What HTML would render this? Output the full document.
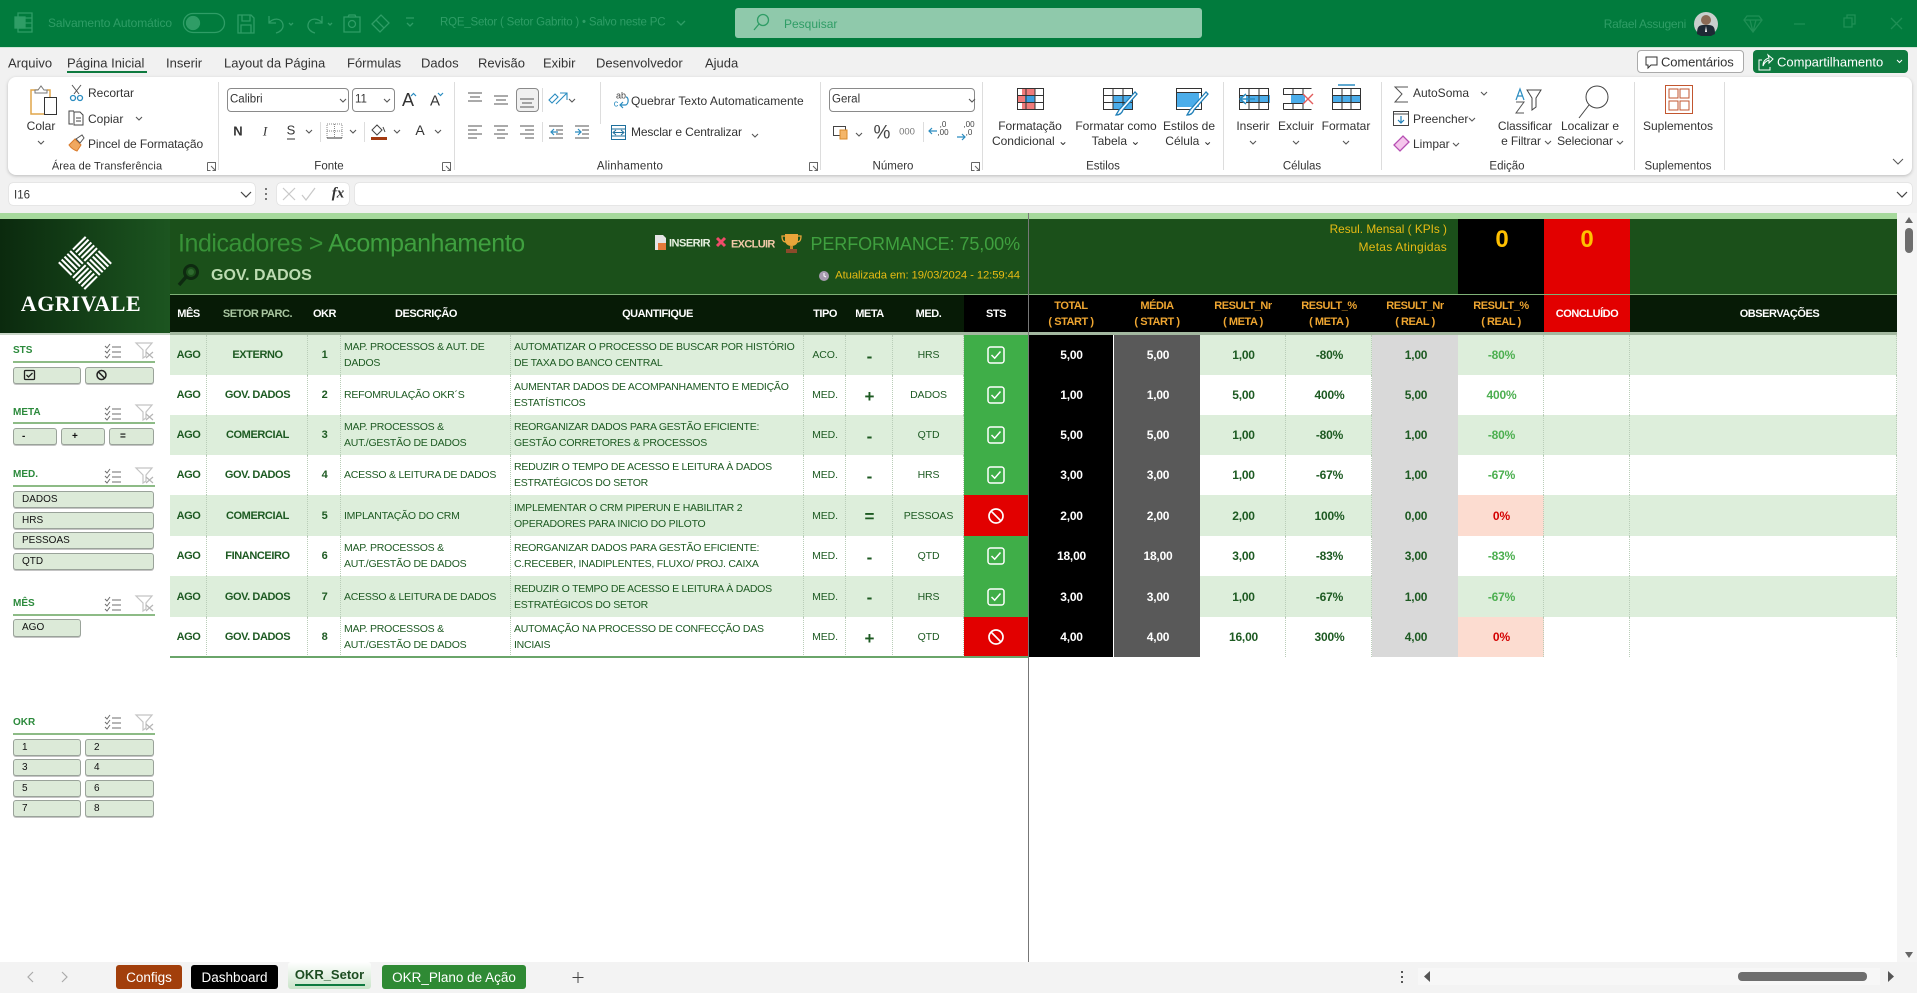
<!DOCTYPE html>
<html lang="pt-BR"><head><meta charset="utf-8"><title>RQE_Setor</title>
<style>
html,body{margin:0;padding:0;width:1917px;height:993px;overflow:hidden;background:#f1f1f1;font-family:"Liberation Sans",sans-serif;color:#333}
.b{position:absolute}
.t,.c,.r{position:absolute;white-space:nowrap;font-size:12px;line-height:1}
.t{transform:translateY(-50%)}
.c{transform:translate(-50%,-50%);text-align:center}
.r{transform:translateY(-50%);text-align:right}
.d{color:#2f9d66}
table{position:absolute;left:170px;top:294px;border-collapse:separate;border-spacing:0;table-layout:fixed;width:1727px}
td,th{padding:0;text-align:center;vertical-align:middle;overflow:hidden;white-space:nowrap}
thead th{background:#071b06;color:#fff;font-size:11px;line-height:15.500px;letter-spacing:-.45px;border-top:1px solid #7fb177;border-bottom:3px solid #a3b8a0;box-sizing:border-box;height:41px;padding-top:2px}
thead th.k{background:#000;color:#efa631}
thead th.s{background:#000}
thead th.v{background:#e20000;color:#fff}
thead th.o{padding-left:32px}
tbody td{font-size:11px;font-weight:bold;color:#1d5a22;letter-spacing:-.4px;border-right:1px dotted #b9cdb8;padding-left:1px}
tbody tr:nth-child(odd) td{background:#ddeedb}
tbody tr:nth-child(even) td{background:#fff}
tbody td.x{font-size:10.500px;font-weight:normal;text-align:left;padding-left:3px;line-height:16px;letter-spacing:-.24px}
tbody td.n{font-weight:normal;font-size:10.500px;letter-spacing:-.1px}
tbody td.m{font-size:17px;letter-spacing:0;line-height:1;padding-top:2px}
tbody tr td.ok{background:#3fae48;border:0;padding:0}
tbody tr td.no{background:#e20000;border:0;padding:0}
tbody tr td.bk{background:#000;color:#fff;font-size:12px;letter-spacing:-.2px;border:0;border-right:1px solid #fff;padding-left:2px}
tbody tr td.gr{background:#595959;color:#fff;font-size:12px;letter-spacing:-.2px;border:0;padding-left:2px}
tbody td.v{font-size:12px;letter-spacing:-.2px;padding-left:2px}
tbody tr td.lg{background:#d9d9d9;font-size:12px;letter-spacing:-.2px;border:0;padding-left:2px}
tbody td.g{color:#4caf50;font-size:12px;letter-spacing:-.2px;padding-left:2px}
tbody tr td.rd{background:#fcdcd0;color:#d40000;font-size:12px;letter-spacing:0;padding-left:2px}
.sl{position:absolute;background:#dcead8;border:1px solid #9aa39a;border-radius:3px;box-sizing:border-box;box-shadow:0 1px 0 #c4c4c4;font-size:10px;color:#111;line-height:15px;padding-left:8px}
.sh{position:absolute;left:13px;width:142px;height:2px;background:#8dbb86}
.sn{position:absolute;left:13px;font-size:10px;font-weight:bold;color:#2c8a3c;transform:translateY(-50%);line-height:1;margin-top:1px}
.tab{position:absolute;top:965px;height:24px;border-radius:3px;color:#fff;font-size:13.500px;line-height:25px;text-align:center}
</style></head><body>

<!-- chrome backgrounds -->
<div class="b" style="left:0;top:0;width:1917px;height:47px;background:#017b3d"></div>
<div class="b" style="left:0;top:47px;width:1917px;height:1px;background:#cfe6d7"></div>
<div class="b" style="left:735px;top:8px;width:467px;height:30px;background:#8fc9ab;border-radius:3px"></div>
<div class="b" style="left:8px;top:77px;width:1904px;height:98px;background:#fff;border-radius:8px;box-shadow:0 1px 3px #bbb"></div>
<div class="b" style="left:67px;top:71px;width:80px;height:2px;background:#0e7a3f"></div>
<div class="b" style="left:1637px;top:50px;width:107px;height:23px;background:#fff;border:1px solid #aaa;border-radius:4px;box-sizing:border-box"></div>
<div class="b" style="left:1753px;top:50px;width:155px;height:23px;background:#0e7a3f;border-radius:4px"></div>
<div class="b" style="left:227px;top:88px;width:122px;height:24px;border:1px solid #8a8a8a;border-radius:4px;box-sizing:border-box"></div>
<div class="b" style="left:352px;top:88px;width:43px;height:24px;border:1px solid #8a8a8a;border-radius:4px;box-sizing:border-box"></div>
<div class="b" style="left:516px;top:88px;width:23px;height:24px;border:1px solid #8a8a8a;border-radius:4px;box-sizing:border-box;background:#f0f0f0"></div>
<div class="b" style="left:829px;top:88px;width:146px;height:24px;border:1px solid #8a8a8a;border-radius:4px;box-sizing:border-box"></div>
<div class="b" style="left:9px;top:183px;width:246px;height:22px;background:#fff;border-radius:4px;box-shadow:0 0 1px #aaa"></div>
<div class="b" style="left:277px;top:183px;width:72px;height:22px;background:#fff;border-radius:4px;box-shadow:0 0 1px #aaa"></div>
<div class="b" style="left:355px;top:183px;width:1557px;height:22px;background:#fff;border-radius:4px;box-shadow:0 0 1px #aaa"></div>

<!-- sheet backgrounds -->
<div class="b" style="left:0;top:213px;width:1897px;height:749px;background:#fff"></div>
<div class="b" style="left:1897px;top:213px;width:20px;height:749px;background:#f5f5f5"></div>
<div class="b" style="left:0;top:213px;width:1897px;height:6px;background:#a6d99c"></div>
<div class="b" style="left:170px;top:219px;width:1727px;height:75px;background:#1b501a"></div>
<div class="b" style="left:0;top:219px;width:170px;height:114px;background:linear-gradient(90deg,#0b2a0e,#1c5520)"></div>
<div class="b" style="left:1458px;top:219px;width:86px;height:75px;background:#000"></div>
<div class="b" style="left:1544px;top:219px;width:86px;height:75px;background:#e20000"></div>
<div class="b" style="left:0;top:333px;width:170px;height:2px;background:#c9d6c8"></div>

<!-- table -->
<table><colgroup><col style="width:37px"><col style="width:101px"><col style="width:33px"><col style="width:170px"><col style="width:293px"><col style="width:42px"><col style="width:47px"><col style="width:71px"><col style="width:64px"><col style="width:86px"><col style="width:86px"><col style="width:86px"><col style="width:86px"><col style="width:86px"><col style="width:86px"><col style="width:86px"><col style="width:267px"></colgroup>
<thead><tr><th>MÊS</th><th style="color:#a9c6a0">SETOR PARC.</th><th>OKR</th><th>DESCRIÇÃO</th><th>QUANTIFIQUE</th><th>TIPO</th><th>META</th><th>MED.</th><th class="s">STS</th><th class="k">TOTAL<br>( START )</th><th class="k">MÉDIA<br>( START )</th><th class="k">RESULT_Nr<br>( META )</th><th class="k">RESULT_%<br>( META )</th><th class="k">RESULT_Nr<br>( REAL )</th><th class="k">RESULT_%<br>( REAL )</th><th class="v">CONCLUÍDO</th><th class="o">OBSERVAÇÕES</th></tr></thead>
<tbody>
<tr style="height:40px"><td>AGO</td><td>EXTERNO</td><td>1</td><td class="x">MAP. PROCESSOS &amp; AUT. DE<br>DADOS</td><td class="x">AUTOMATIZAR O PROCESSO DE BUSCAR POR HISTÓRIO<br>DE TAXA DO BANCO CENTRAL</td><td class="n">ACO.</td><td class="m">-</td><td class="n">HRS</td><td class="ok"><svg width="18" height="18" viewBox="0 0 18 18" fill="none" style="display:block;margin:auto"><use href="#ck"/></svg></td><td class="bk">5,00</td><td class="gr">5,00</td><td class="v">1,00</td><td class="v">-80%</td><td class="lg">1,00</td><td class="g">-80%</td><td></td><td></td></tr>
<tr style="height:40px"><td>AGO</td><td>GOV. DADOS</td><td>2</td><td class="x">REFOMRULAÇÃO OKR´S</td><td class="x">AUMENTAR DADOS DE ACOMPANHAMENTO E MEDIÇÃO<br>ESTATÍSTICOS</td><td class="n">MED.</td><td class="m">+</td><td class="n">DADOS</td><td class="ok"><svg width="18" height="18" viewBox="0 0 18 18" fill="none" style="display:block;margin:auto"><use href="#ck"/></svg></td><td class="bk">1,00</td><td class="gr">1,00</td><td class="v">5,00</td><td class="v">400%</td><td class="lg">5,00</td><td class="g">400%</td><td></td><td></td></tr>
<tr style="height:40px"><td>AGO</td><td>COMERCIAL</td><td>3</td><td class="x">MAP. PROCESSOS &amp;<br>AUT./GESTÃO DE DADOS</td><td class="x">REORGANIZAR DADOS PARA GESTÃO EFICIENTE:<br>GESTÃO CORRETORES &amp; PROCESSOS</td><td class="n">MED.</td><td class="m">-</td><td class="n">QTD</td><td class="ok"><svg width="18" height="18" viewBox="0 0 18 18" fill="none" style="display:block;margin:auto"><use href="#ck"/></svg></td><td class="bk">5,00</td><td class="gr">5,00</td><td class="v">1,00</td><td class="v">-80%</td><td class="lg">1,00</td><td class="g">-80%</td><td></td><td></td></tr>
<tr style="height:40px"><td>AGO</td><td>GOV. DADOS</td><td>4</td><td class="x">ACESSO &amp; LEITURA DE DADOS</td><td class="x">REDUZIR O TEMPO DE ACESSO E LEITURA À DADOS<br>ESTRATÉGICOS DO SETOR</td><td class="n">MED.</td><td class="m">-</td><td class="n">HRS</td><td class="ok"><svg width="18" height="18" viewBox="0 0 18 18" fill="none" style="display:block;margin:auto"><use href="#ck"/></svg></td><td class="bk">3,00</td><td class="gr">3,00</td><td class="v">1,00</td><td class="v">-67%</td><td class="lg">1,00</td><td class="g">-67%</td><td></td><td></td></tr>
<tr style="height:41px"><td>AGO</td><td>COMERCIAL</td><td>5</td><td class="x">IMPLANTAÇÃO DO CRM</td><td class="x">IMPLEMENTAR O CRM PIPERUN E HABILITAR 2<br>OPERADORES PARA INICIO DO PILOTO</td><td class="n">MED.</td><td class="m">=</td><td class="n">PESSOAS</td><td class="no"><svg width="18" height="18" viewBox="0 0 18 18" fill="none" style="display:block;margin:auto"><use href="#no"/></svg></td><td class="bk">2,00</td><td class="gr">2,00</td><td class="v">2,00</td><td class="v">100%</td><td class="lg">0,00</td><td class="rd">0%</td><td></td><td></td></tr>
<tr style="height:40px"><td>AGO</td><td>FINANCEIRO</td><td>6</td><td class="x">MAP. PROCESSOS &amp;<br>AUT./GESTÃO DE DADOS</td><td class="x">REORGANIZAR DADOS PARA GESTÃO EFICIENTE:<br>C.RECEBER, INADIPLENTES, FLUXO/ PROJ. CAIXA</td><td class="n">MED.</td><td class="m">-</td><td class="n">QTD</td><td class="ok"><svg width="18" height="18" viewBox="0 0 18 18" fill="none" style="display:block;margin:auto"><use href="#ck"/></svg></td><td class="bk">18,00</td><td class="gr">18,00</td><td class="v">3,00</td><td class="v">-83%</td><td class="lg">3,00</td><td class="g">-83%</td><td></td><td></td></tr>
<tr style="height:41px"><td>AGO</td><td>GOV. DADOS</td><td>7</td><td class="x">ACESSO &amp; LEITURA DE DADOS</td><td class="x">REDUZIR O TEMPO DE ACESSO E LEITURA À DADOS<br>ESTRATÉGICOS DO SETOR</td><td class="n">MED.</td><td class="m">-</td><td class="n">HRS</td><td class="ok"><svg width="18" height="18" viewBox="0 0 18 18" fill="none" style="display:block;margin:auto"><use href="#ck"/></svg></td><td class="bk">3,00</td><td class="gr">3,00</td><td class="v">1,00</td><td class="v">-67%</td><td class="lg">1,00</td><td class="g">-67%</td><td></td><td></td></tr>
<tr style="height:40px"><td>AGO</td><td>GOV. DADOS</td><td>8</td><td class="x">MAP. PROCESSOS &amp;<br>AUT./GESTÃO DE DADOS</td><td class="x">AUTOMAÇÃO NA PROCESSO DE CONFECÇÃO DAS<br>INCIAIS</td><td class="n">MED.</td><td class="m">+</td><td class="n">QTD</td><td class="no"><svg width="18" height="18" viewBox="0 0 18 18" fill="none" style="display:block;margin:auto"><use href="#no"/></svg></td><td class="bk">4,00</td><td class="gr">4,00</td><td class="v">16,00</td><td class="v">300%</td><td class="lg">4,00</td><td class="rd">0%</td><td></td><td></td></tr>
</tbody></table>
<div class="b" style="left:170px;top:656px;width:858px;height:2px;background:#6aa56a"></div>
<div class="b" style="left:1028px;top:213px;width:1px;height:749px;background:#777"></div>

<!-- bottom bar -->
<div class="b" style="left:0;top:962px;width:1917px;height:31px;background:#f3f3f3"></div>
<div class="b" style="left:1418px;top:968px;width:462px;height:17px;background:#f7f7f7"></div>
<div class="b" style="left:1738px;top:972px;width:129px;height:9px;background:#6e6e6e;border-radius:4px"></div>
<div class="b" style="left:1905px;top:228px;width:8px;height:25px;background:#6e6e6e;border-radius:4px"></div>
<div class="tab" style="left:116px;width:66px;background:#a23f0b">Configs</div>
<div class="tab" style="left:191px;width:87px;background:#000">Dashboard</div>
<div class="tab" style="left:288px;top:962px;width:83px;height:27px;background:linear-gradient(#fff,#c9e4c9);color:#1d4d22;font-weight:bold;font-size:13px;line-height:26px">OKR_Setor</div>
<div class="b" style="left:295px;top:984px;width:70px;height:2px;background:#0e7a3f"></div>
<div class="tab" style="left:382px;width:144px;background:#2f8a34">OKR_Plano de Ação</div>

<!-- icons -->
<svg class="b" style="left:0;top:0" width="1917" height="993" viewBox="0 0 1917 993" fill="none">
<defs>
<g id="ck" fill="none"><rect x="1" y="1" width="16" height="16" rx="2.500" stroke="#fff" stroke-width="1.500"/><path d="M4.500 9l3.200 3.200L13.500 5.500" stroke="#fff" stroke-width="1.500"/></g>
<g id="no" fill="none"><circle cx="9" cy="9" r="7" stroke="#fff" stroke-width="1.700"/><path d="M4.200 4.200l9.600 9.600" stroke="#fff" stroke-width="1.700"/></g>
<g id="cl" stroke="#6c6c6c" stroke-width="1"><path d="M0 3l2 2 3-4M0 8l2 2 3-4M0 13l2 2 3-4"/><path d="M7 4h9M7 9h9M7 14h9"/></g>
<g id="fl" stroke="#c4c4c4" stroke-width="1.200"><path d="M0 0h16l-6 7v6l-3 2V7z"/><path d="M10 9l7 6M17 9l-7 6" stroke="#b5b5b5"/></g>
<g id="lc" stroke="#666" stroke-width="1"><path d="M.5 .5h8v8M.5 .5v8h3M4 4l4.500 4.500M8.500 5.500v3h-3"/></g>
<path id="ch" d="M0 0l3 3 3-3" stroke="#555" stroke-width="1.100"/>
<g id="gd" stroke="#333" stroke-width="1"><path d="M.5 .5h29v21H.5zM.5 7.500h29M.5 14.500h29M10 .5v21M20 .5v21"/></g>
</defs>

<!-- title bar icons -->
<g stroke="#2f9d66" stroke-width="1.300">
<path d="M18 13h14v19H18zM18 18h14M18 23h14M18 28h14"/><rect x="15" y="17" width="10" height="11" fill="#2f9d66"/>
<rect x="183.500" y="13.500" width="41" height="19" rx="9.500"/><circle cx="193" cy="23" r="6.500" fill="#2f9d66"/>
<path d="M238 15h13l3 3v15h-16zM242 15v6h8v-6M241 33v-8h10v8"/>
<path d="M269 16v7h7M269 23c3-5 13-6 14 2 .5 4-3 7-7 8"/><path d="M289 23l2 2 2-2"/>
<path d="M322 16v7h-7M322 23c-3-5-13-6-14 2-.5 4 3 7 7 8"/><path d="M328 23l2 2 2-2"/>
<path d="M344 17h16v15h-16zM348 17l1-2h6l1 2"/><circle cx="352" cy="24" r="3.500"/>
<path d="M372 24l9-9 8 8-9 9zM376 20l8 8"/><path d="M406 18h8M407 23l3 3 3-3"/>
<circle cx="763" cy="20" r="5.500"/><path d="M759 24l-5 6"/><path d="M677 21l4 4 4-4"/>
</g>
<g stroke="#1f8f55" stroke-width="1.300">
<path d="M1747 16h12l3 4-9 12-9-12zM1744 20h18M1750 20l3 12 3-12"/>
<path d="M1794 24h11M1844 18h8v9h-8zM1847 18v-3h8v9h-3M1891 18l11 11M1902 18l-11 11"/>
</g>
<circle cx="1706" cy="24" r="12" fill="#c9cfcd"/><circle cx="1706" cy="20" r="5" fill="#8a6a55"/><path d="M1697 34c0-9 3-9 9-9s9 0 9 9l-4 2h-10z" fill="#1e2a35"/><path d="M1706 26l-1 6h2z" fill="#fff"/>

<!-- comment / share icons -->
<path d="M1646 57h11v8h-6l-3 3v-3h-2z" stroke="#333"/>
<g stroke="#fff"><path d="M1762 60h-3v10h11v-3M1763 66c0-4 2-7 6-8l-1-3 5 4-4 4v-3c-3 1-5 3-6 6z"/><path d="M1897 60l2.500 2.500 2.500-2.500"/></g>

<!-- clipboard group -->
<path d="M47 90h3v7M42 90h-11v24h13" stroke="#e0a64a" stroke-width="1.500"/><path d="M35 93v-3h3l3-4 3 4h3v3z" stroke="#777" fill="#fff"/><rect x="44.500" y="97.500" width="12" height="17" stroke="#333" fill="#fff"/>
<use href="#ch" x="38" y="141"/>
<path d="M72 85l7 9M81 85l-7 9" stroke="#555"/><circle cx="73" cy="98" r="2.500" stroke="#2a8cc0" stroke-width="1.300"/><circle cx="80" cy="98" r="2.500" stroke="#2a8cc0" stroke-width="1.300"/>
<path d="M73 124h-4v-13h5M74 112h6l3 3v10h-9zM76 118h5M76 121h5" stroke="#444"/>
<use href="#ch" x="136" y="117"/>
<path d="M69 145l6-6 6 6-4 6c-3-1-6-3-8-6z" fill="#f0a860" stroke="#d97a2a"/><path d="M76 139l6-4 2 3-4 5z" stroke="#555" fill="#fff"/>
<use href="#lc" x="207" y="162"/><path d="M218.500 82v88M454.500 82v88M600.500 82v42M820.500 82v88M982.500 82v88M1223.500 82v88M1381.500 82v88M1634.500 82v88M1724.500 82v88" stroke="#ddd"/>

<!-- font group -->
<use href="#ch" x="340" y="99"/><use href="#ch" x="384" y="99"/>
<path d="M411 96l2.500-2.500L416 96" stroke="#2a8cc0" stroke-width="1.200"/><path d="M438 93l2.500 2.500L443 93" stroke="#2a8cc0" stroke-width="1.200"/>
<path d="M287 139h8" stroke="#333"/><use href="#ch" x="306" y="130"/><use href="#ch" x="350" y="130"/><use href="#ch" x="394" y="130"/><use href="#ch" x="435" y="130"/>
<path d="M320.500 122v20M364.500 122v20M542.500 88v24M542.500 122v20M923.500 122v20" stroke="#ddd"/>
<path d="M327 124h15v14h-15zM334.500 124v14M327 131h15" stroke="#888" stroke-dasharray="1 1"/><path d="M327 138h15" stroke="#333"/>
<path d="M377 125l-5 5 5 5 5-5zM383 127l2 5" stroke="#444"/><rect x="371" y="137" width="16" height="3" fill="#a33a10"/>

<!-- alignment icons -->
<g stroke="#555" stroke-width="1.100">
<path d="M468 93h14M470 97h10M468 101h14"/><path d="M494 96h14M496 100h10M494 104h14"/><path d="M520 99h14M522 103h10M520 107h14"/>
<path d="M468 126h14M468 130h9M468 134h14M468 138h9"/><path d="M494 126h14M497 130h8M494 134h14M497 138h8"/><path d="M520 126h14M525 130h9M520 134h14M525 138h9"/>
<path d="M549 126h14M556 130h7M556 134h7M549 138h14"/><path d="M575 126h14M582 130h7M582 134h7M575 138h14"/>
</g>
<path d="M558 132h-7M554 129l-3 3 3 3M575 132h6M578 129l3 3-3 3" stroke="#2a8cc0" stroke-width="1.200"/>
<path d="M549 100l6-6 3 3-6 6zM560 93h7v7M567 93l-11 11" stroke="#2a8cc0" stroke-width="1.100"/>
<use href="#ch" x="569" y="99"/>
<path d="M626 97c3 0 3 8-1 8h-5M623 102l-3 3 3 3" stroke="#2a8cc0" stroke-width="1.200"/>
<rect x="611.500" y="125.500" width="14" height="14" stroke="#1e6f9c"/><path d="M612 129h13M612 136h13M614 132.500h9M616 130l-3 2.500 3 2.500M621 130l3 2.500-3 2.500" stroke="#1e6f9c"/>
<use href="#ch" x="752" y="134"/>
<use href="#lc" x="442" y="162"/><use href="#lc" x="809" y="162"/><use href="#lc" x="971" y="162"/>

<!-- number icons -->
<use href="#ch" x="969" y="99"/>
<rect x="833.500" y="126.500" width="12" height="9" stroke="#444"/><rect x="840" y="130" width="7" height="9" fill="#f4b66a" stroke="#d98a2a"/><use href="#ch" x="856" y="133"/>
<path d="M929 131h8M932 128l-3 3 3 3M957 137h8M962 134l3 3-3 3" stroke="#2a8cc0" stroke-width="1.200"/>

<!-- styles icons -->
<g transform="translate(1017,88)"><rect x="0" y="7" width="10" height="8" fill="#f07b7b"/><rect x="5" y="0" width="13" height="7" fill="#f07b7b"/><rect x="5" y="15" width="13" height="7" fill="#f07b7b"/><rect x="8" y="7" width="10" height="8" fill="#3b9fe0"/><path d="M.5 .5h26v21H.5zM.5 7.500h26M.5 14.500h26M9 .5v21M18 .5v21" stroke="#333"/></g>
<g transform="translate(1103,88)"><rect x="10" y="7" width="20" height="15" fill="#4badea"/><use href="#gd"/><path d="M32 4L16 22l-3 5c4 0 6-2 7-5L34 6z" fill="#fff" stroke="#1f7fb8" stroke-width="1.300"/></g>
<g transform="translate(1176,88)"><rect x="1" y="5" width="22" height="14" fill="#4badea"/><path d="M.5 .5h25v21H.5zM.5 4.500h25" stroke="#333"/><path d="M30 4L14 22l-3 5c4 0 6-2 7-5L32 6z" fill="#fff" stroke="#1f7fb8" stroke-width="1.300"/></g>

<!-- cell icons -->
<g transform="translate(1239,88)"><rect x="0" y="7" width="31" height="8" fill="#4badea"/><use href="#gd"/><path d="M16 11H2M7 6l-6 5 6 5" stroke="#2a8cc0" stroke-width="1.500" fill="#fff"/></g>
<g transform="translate(1283,88)"><rect x="8" y="7" width="14" height="8" fill="#4badea"/><path d="M.5 .5h28M.5 21.500h28M.5 .5v6h20M.5 21.500v-6h20M10 .5v6M10 15v6M20 .5v6M20 15v6" stroke="#333"/><path d="M20 6l10 10M30 6L20 16" stroke="#e25c5c" stroke-width="1.400"/></g>
<g transform="translate(1332,88)"><rect x="1" y="7" width="27" height="8" fill="#4badea"/><path d="M.5 .5h28v21H.5zM.5 7.500h28M.5 14.500h28M10 .5v21M19 .5v21" stroke="#333"/><path d="M6 -3h17" stroke="#2a8cc0" stroke-width="1.500"/></g>
<use href="#ch" x="1250" y="141"/><use href="#ch" x="1293" y="141"/><use href="#ch" x="1343" y="141"/>

<!-- editing icons -->
<path d="M1408 87h-13l7 7-7 8h13" stroke="#555"/><use href="#ch" x="1481" y="92"/>
<rect x="1393.500" y="111.500" width="15" height="14" stroke="#444"/><path d="M1394 114h15" stroke="#444"/><path d="M1401 116v7M1398 120l3 3 3-3" stroke="#1f7fb8" stroke-width="1.200"/><use href="#ch" x="1469" y="118"/>
<path d="M1394 145l9-9 6 6-9 9z" fill="#f5c6ec" stroke="#b64fb3" stroke-width="1.300"/><use href="#ch" x="1453" y="143"/>
<path d="M1516 100l4-11 4 11M1517 96h6" stroke="#2a8cc0" stroke-width="1.200"/><path d="M1516 102h8l-8 11h8" stroke="#555"/><path d="M1527 90h14l-5 8v9l-4 3V98z" stroke="#444"/>
<use href="#ch" x="1545" y="141"/><use href="#ch" x="1617" y="141"/>
<circle cx="1597" cy="97" r="11" stroke="#444"/><path d="M1589 105l-10 13" stroke="#444"/>
<rect x="1665.500" y="85.500" width="27" height="28" stroke="#c2562f"/><path d="M1669 89h9v9h-9zM1680 89h9v9h-9zM1669 101h9v9h-9zM1680 101h9v9h-9z" stroke="#c2562f"/>
<path d="M1893 159l5 5 5-5" stroke="#555"/>

<!-- formula bar -->
<path d="M241 192l5 5 5-5M1897 192l5 5 5-5" stroke="#444" stroke-width="1.200"/><path d="M266 188v2M266 193v2M266 198v2" stroke="#444" stroke-width="1.400"/>
<path d="M283 188l12 12M295 188l-12 12M302 195l4 5 9-12" stroke="#c8c8c8" stroke-width="1.200"/>

<!-- logo -->
<g transform="translate(85,263) rotate(45)" stroke="#fff" stroke-width="2.100">
<path d="M-18-19V-1M-14-19V-1M-10-19V-1M-6-19V-1M-2-19V-1"/>
<path d="M1-18H19M1-14H19M1-10H19M1-6H19M1-2H19"/>
<path d="M2 1V19M6 1V19M10 1V19M14 1V19M18 1V19"/>
<path d="M-19 2H-1M-19 6H-1M-19 10H-1M-19 14H-1M-19 18H-1"/>
</g>

<!-- title row icons -->
<circle cx="191" cy="272" r="6.500" stroke="#0e2a10" stroke-width="3"/><circle cx="191" cy="272" r="3" fill="#2f6a2f"/><path d="M186 277l-7 8" stroke="#0e2a10" stroke-width="3.500"/>
<path d="M655 235h8l3 3v12h-11z" fill="#e4e4e4"/><rect x="658" y="243" width="8" height="7" fill="#e57a3a"/>
<path d="M717 238l8 8M725 238l-8 8" stroke="#ee4c6a" stroke-width="3"/>
<path d="M785 234h13v6c0 4-3 6-6.500 6s-6.500-2-6.500-6z" fill="#e9a53a"/><path d="M785 236h-3c0 4 1 6 4 6M798 236h3c0 4-1 6-4 6" stroke="#e9a53a" stroke-width="1.300"/><rect x="790" y="246" width="3" height="3" fill="#c9892a"/><rect x="786" y="249" width="11" height="4" fill="#8a4a2a"/>
<circle cx="824" cy="276" r="5" fill="#a79bb0"/><path d="M824 273v3l2 1" stroke="#fff"/>

<!-- slicer icons -->
<use href="#cl" x="105" y="343"/><use href="#fl" x="136" y="343"/>
<use href="#cl" x="105" y="405"/><use href="#fl" x="136" y="405"/>
<use href="#cl" x="105" y="468"/><use href="#fl" x="136" y="468"/>
<use href="#cl" x="105" y="596"/><use href="#fl" x="136" y="596"/>
<use href="#cl" x="105" y="714"/><use href="#fl" x="136" y="715"/>

<!-- sheet nav -->
<path d="M33 972l-5 5 5 5" stroke="#aaa" stroke-width="1.200"/><path d="M62 972l5 5-5 5" stroke="#aaa" stroke-width="1.200"/>
<path d="M578 972v11M572.500 977.500h11" stroke="#444"/>
<path d="M1402 971v2M1402 976v2M1402 981v2" stroke="#222" stroke-width="1.500"/>
<path d="M1430 971v11l-6-5.500zM1888 971v11l6-5.500z" fill="#555"/>
<path d="M1909 217l4 6h-8zM1909 958l4-6h-8z" fill="#666"/>
</svg>

<!-- slicers -->
<div class="sn" style="top:350px">STS</div><div class="sh" style="top:361px"></div>
<div class="sl" style="left:13px;top:367px;width:68px;height:17px"></div><div class="sl" style="left:85px;top:367px;width:69px;height:17px"></div>
<svg class="b" style="left:23px;top:369px" width="14" height="14" viewBox="0 0 14 14" fill="none"><rect x="1.500" y="1.500" width="10" height="9" rx="1" stroke="#222" stroke-width="1.300"/><path d="M3.500 6l2 2 4-4" stroke="#222" stroke-width="1.300"/></svg>
<svg class="b" style="left:95px;top:369px" width="14" height="14" viewBox="0 0 14 14" fill="none"><circle cx="6.500" cy="6" r="4.500" stroke="#222" stroke-width="1.500"/><path d="M3.500 3l6 6" stroke="#222" stroke-width="1.500"/></svg>
<div class="sn" style="top:412px">META</div><div class="sh" style="top:422px"></div>
<div class="sl" style="left:13px;top:428px;width:44px;height:17px;font-weight:bold">-</div><div class="sl" style="left:61px;top:428px;width:44px;height:17px;padding-left:10px;font-weight:bold">+</div><div class="sl" style="left:109px;top:428px;width:45px;height:17px;padding-left:10px;font-weight:bold">=</div>
<div class="sn" style="top:474px">MED.</div><div class="sh" style="top:485px"></div>
<div class="sl" style="left:13px;top:491px;width:141px;height:17px">DADOS</div><div class="sl" style="left:13px;top:512px;width:141px;height:17px">HRS</div><div class="sl" style="left:13px;top:532px;width:141px;height:17px">PESSOAS</div><div class="sl" style="left:13px;top:553px;width:141px;height:17px">QTD</div>
<div class="sn" style="top:603px">MÊS</div><div class="sh" style="top:614px"></div>
<div class="sl" style="left:13px;top:619px;width:68px;height:18px">AGO</div>
<div class="sn" style="top:722px">OKR</div><div class="sh" style="top:733px"></div>
<div class="sl" style="left:13px;top:739px;width:68px;height:17px">1</div><div class="sl" style="left:85px;top:739px;width:69px;height:17px">2</div>
<div class="sl" style="left:13px;top:759px;width:68px;height:17px">3</div><div class="sl" style="left:85px;top:759px;width:69px;height:17px">4</div>
<div class="sl" style="left:13px;top:780px;width:68px;height:17px">5</div><div class="sl" style="left:85px;top:780px;width:69px;height:17px">6</div>
<div class="sl" style="left:13px;top:800px;width:68px;height:17px">7</div><div class="sl" style="left:85px;top:800px;width:69px;height:17px">8</div>

<!-- title bar text -->
<div class="t d" style="left:48px;top:23px;font-size:12px;letter-spacing:-.1px">Salvamento Automático</div>
<div class="t d" style="left:440px;top:23px;font-size:11.500px;letter-spacing:-.2px">RQE_Setor ( Setor Gabrito )  •  Salvo neste PC</div>
<div class="t d" style="left:784px;top:24px;font-size:12px">Pesquisar</div>
<div class="r d" style="right:231px;top:24px;font-size:12px;letter-spacing:-.3px">Rafael Assugeni</div>

<!-- tabs -->
<div class="t" style="left:8px;top:62.500px;font-size:13px">Arquivo</div>
<div class="t" style="left:67px;top:62.500px;font-size:13px">Página Inicial</div>
<div class="t" style="left:166px;top:62.500px;font-size:13px">Inserir</div>
<div class="t" style="left:224px;top:62.500px;font-size:13px">Layout da Página</div>
<div class="t" style="left:347px;top:62.500px;font-size:13px">Fórmulas</div>
<div class="t" style="left:421px;top:62.500px;font-size:13px">Dados</div>
<div class="t" style="left:478px;top:62.500px;font-size:13px">Revisão</div>
<div class="t" style="left:543px;top:62.500px;font-size:13px">Exibir</div>
<div class="t" style="left:596px;top:62.500px;font-size:13px">Desenvolvedor</div>
<div class="t" style="left:705px;top:62.500px;font-size:13px">Ajuda</div>
<div class="t" style="left:1661px;top:62px;font-size:13px;letter-spacing:-.1px">Comentários</div>
<div class="t" style="left:1777px;top:62px;font-size:13px;color:#fff">Compartilhamento</div>

<!-- ribbon text -->
<div class="c" style="left:41px;top:126px">Colar</div>
<div class="t" style="left:88px;top:93px">Recortar</div>
<div class="t" style="left:88px;top:119px">Copiar</div>
<div class="t" style="left:88px;top:144px;letter-spacing:-.08px">Pincel de Formatação</div>
<div class="c" style="left:107px;top:166.500px;font-size:11px;letter-spacing:.1px">Área de Transferência</div>
<div class="t" style="left:230px;top:100px;font-size:11.500px">Calibri</div>
<div class="t" style="left:355px;top:100px;font-size:11.500px">11</div>
<div class="c" style="left:408px;top:100px;font-size:18px">A</div>
<div class="c" style="left:435px;top:101px;font-size:15px">A</div>
<div class="c" style="left:238px;top:131px;font-size:13px;font-weight:bold">N</div>
<div class="c" style="left:265px;top:131px;font-size:13px;font-style:italic;font-family:'Liberation Serif',serif">I</div>
<div class="c" style="left:291px;top:130px;font-size:13px">S</div>
<div class="c" style="left:420px;top:130px;font-size:14px">A</div>
<div class="c" style="left:329px;top:166.500px;font-size:11.500px">Fonte</div>
<div class="c" style="left:621px;top:96px;font-size:9px;color:#444">ab</div>
<div class="c" style="left:616px;top:104px;font-size:9px;color:#2a8cc0">c</div>
<div class="t" style="left:631px;top:101px;letter-spacing:.03px">Quebrar Texto Automaticamente</div>
<div class="t" style="left:631px;top:132px;letter-spacing:-.12px">Mesclar e Centralizar</div>
<div class="c" style="left:630px;top:166.500px;font-size:11.500px;letter-spacing:.2px">Alinhamento</div>
<div class="t" style="left:832px;top:100px;font-size:11.500px">Geral</div>
<div class="c" style="left:882px;top:133px;font-size:19px;color:#444">%</div>
<div class="c" style="left:907px;top:132px;font-size:9.500px;color:#777">000</div>
<div class="c" style="left:943px;top:129px;font-size:8px;line-height:8px;color:#444">,0<br>,00</div>
<div class="c" style="left:969px;top:129px;font-size:8px;line-height:8px;color:#444">,00<br>,0</div>
<div class="c" style="left:893px;top:166.500px;font-size:11.500px">Número</div>
<div class="c" style="left:1030px;top:126px;letter-spacing:-.05px">Formatação</div>
<div class="c" style="left:1030px;top:141px">Condicional ⌄</div>
<div class="c" style="left:1116px;top:126px">Formatar como</div>
<div class="c" style="left:1116px;top:141px">Tabela ⌄</div>
<div class="c" style="left:1189px;top:126px">Estilos de</div>
<div class="c" style="left:1189px;top:141px">Célula ⌄</div>
<div class="c" style="left:1103px;top:166.500px;font-size:11.500px">Estilos</div>
<div class="c" style="left:1253px;top:126px">Inserir</div>
<div class="c" style="left:1296px;top:126px">Excluir</div>
<div class="c" style="left:1346px;top:126px">Formatar</div>
<div class="c" style="left:1302px;top:166.500px;font-size:11.500px">Células</div>
<div class="t" style="left:1413px;top:93px">AutoSoma</div>
<div class="t" style="left:1413px;top:119px">Preencher</div>
<div class="t" style="left:1413px;top:144px">Limpar</div>
<div class="c" style="left:1525px;top:126px;letter-spacing:-.1px">Classificar</div>
<div class="c" style="left:1521px;top:141px;letter-spacing:-.1px">e Filtrar</div>
<div class="c" style="left:1590px;top:126px">Localizar e</div>
<div class="c" style="left:1585px;top:141px;letter-spacing:-.1px">Selecionar</div>
<div class="c" style="left:1507px;top:166.500px;font-size:11.500px">Edição</div>
<div class="c" style="left:1678px;top:126px">Suplementos</div>
<div class="c" style="left:1678px;top:166.500px;font-size:11.500px">Suplementos</div>
<div class="t" style="left:14px;top:195.500px;font-size:11.500px">I16</div>
<div class="c" style="left:338px;top:194px;font-size:15px;font-style:italic;font-family:'Liberation Serif',serif;font-weight:bold">fx</div>

<!-- sheet header text -->
<div class="c" style="left:81px;top:304px;font-family:'Liberation Serif',serif;font-weight:bold;font-size:22px;color:#fff;letter-spacing:.6px">AGRIVALE</div>
<div class="t" style="left:178px;top:244px;font-size:25px;color:#3fa03f;letter-spacing:-.45px"><span style="color:#379237">Indicadores &gt; </span>Acompanhamento</div>
<div class="t" style="left:211px;top:276px;font-size:16px;font-weight:bold;color:#bddcb2">GOV. DADOS</div>
<div class="t" style="left:669px;top:244px;font-size:11px;font-weight:bold;color:#e7f0e0;letter-spacing:-.5px">INSERIR</div>
<div class="t" style="left:731px;top:245px;font-size:11px;font-weight:bold;color:#f1c9a8;letter-spacing:-.65px">EXCLUIR</div>
<div class="r" style="right:897px;top:244px;font-size:18px;color:#3fa03f;letter-spacing:-.08px">PERFORMANCE: 75,00%</div>
<div class="r" style="right:897px;top:276px;font-size:11.300px;color:#e8bb14;letter-spacing:-.1px">Atualizada em: 19/03/2024 - 12:59:44</div>
<div class="r" style="right:470px;top:230px;font-size:11.800px;color:#e8bb14">Resul. Mensal ( KPIs )</div>
<div class="r" style="right:470px;top:247px;font-size:12px;color:#e8bb14;letter-spacing:.25px">Metas Atingidas</div>
<div class="c" style="left:1502px;top:240px;font-size:24px;font-weight:bold;color:#ffc000">0</div>
<div class="c" style="left:1587px;top:240px;font-size:24px;font-weight:bold;color:#ffc000">0</div>
</body></html>
